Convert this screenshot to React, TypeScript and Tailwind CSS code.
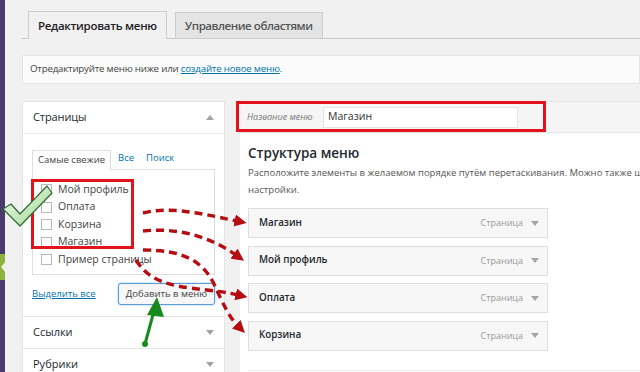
import React from 'react'

const font = { fontFamily: '"Open Sans", "Liberation Sans", sans-serif' }

const TriDown = () => (
  <span className="block w-0 h-0 border-l-[4px] border-r-[4px] border-t-[5px] border-l-transparent border-r-transparent border-t-[#a0a5aa]" />
)

const TriUp = () => (
  <span className="block w-0 h-0 border-l-[4px] border-r-[4px] border-b-[5px] border-l-transparent border-r-transparent border-b-[#a0a5aa]" />
)

const pages = ['Мой профиль', 'Оплата', 'Корзина', 'Магазин', 'Пример страницы']
const menuItems = ['Магазин', 'Мой профиль', 'Оплата', 'Корзина']

// red dashed arrows, green arrow and check mark drawn over the page
const Annotations: React.FC = () => (
  <svg className="absolute inset-0 pointer-events-none" width="640" height="372" viewBox="0 0 640 372">
    <defs>
      <marker id="rh" viewBox="0 0 10 10" refX="2" refY="5" markerWidth="3.6" markerHeight="3.6" orient="auto">
        <path d="M0,0 L10,5 L0,10 z" fill="#b50d12" />
      </marker>
      <linearGradient id="cg" x1="0" y1="0" x2="1" y2="1">
        <stop offset="0" stopColor="#f4fff0" />
        <stop offset="1" stopColor="#9ad58f" />
      </linearGradient>
    </defs>
    <g fill="none" stroke="#b50d12" strokeWidth="3.4" strokeDasharray="8 5" markerEnd="url(#rh)">
      <path d="M143,213 C168,207 190,211 237,221" />
      <path d="M143,231 C180,227 212,238 236,255" />
      <path d="M143,250 C185,250 203,262 214,284 C224,306 230,318 238,326" />
      <path d="M136,260 C146,276 160,284 190,288 C214,291 226,292 238,295" />
    </g>
    <line x1="145" y1="344" x2="154" y2="311" stroke="#168a1c" strokeWidth="3" />
    <polygon points="157,297 147,315 164,317" fill="#168a1c" />
    <circle cx="145" cy="344" r="3" fill="#168a1c" />
    <polygon
      points="3,209 11,204 20,214 47,186 52,193 20,226"
      fill="url(#cg)"
      stroke="#2f6a34"
      strokeWidth="1.2"
      strokeLinejoin="round"
    />
  </svg>
)

export default function App() {
  return (
    <div className="relative flex w-[640px] h-[372px] overflow-hidden bg-[#f1f1f1] text-[#444]" style={font}>
      {/* admin sidebar edge */}
      <div className="relative w-[5px] shrink-0 bg-[#4b3b6c]">
        <div className="absolute left-0 top-[254px] w-[5px] h-[26px] bg-[#8cb43c]" />
        <div className="absolute left-[1px] top-[261px] w-0 h-0 border-t-[6px] border-b-[6px] border-r-[5px] border-t-transparent border-b-transparent border-r-[#f1f1f1]" />
      </div>

      <div className="flex-1 min-w-0 pl-[17px] pt-[11px] flex flex-col">
        {/* tabs */}
        <div className="shrink-0 flex items-end gap-[8px] pl-[6px] h-[28px] border-b border-[#ccc]">
          <div className="h-[28px] -mb-px px-[9px] flex items-center border border-b-0 border-[#ccc] bg-[#f1f1f1] text-[11.5px] tracking-[-0.3px] font-semibold text-[#222]">
            Редактировать меню
          </div>
          <div className="h-[26px] px-[9px] flex items-center border border-b-0 border-[#ccc] bg-[#e4e4e4] text-[11.5px] tracking-[-0.45px] font-semibold text-[#555]">
            Управление областями
          </div>
        </div>

        {/* notice */}
        <div className="shrink-0 mt-[16px] h-[29px] bg-[#fbfbfb] border border-[#e5e5e5] flex items-center pl-[7px] text-[9.7px] tracking-[-0.2px] text-[#444]">
          <span>
            Отредактируйте меню ниже или{' '}
            <span className="text-[#0073aa] underline">создайте новое меню</span>.
          </span>
        </div>

        <div className="shrink-0 mt-[17px] flex">
          {/* left column */}
          <div className="w-[203px] shrink-0 bg-white border border-[#e5e5e5]">
            <div className="h-[32px] flex items-center justify-between pl-[10px] pr-[10px] border-b border-[#eee]">
              <span className="text-[11px] tracking-[-0.1px] text-[#23282d]">Страницы</span>
              <TriUp />
            </div>
            <div className="px-[9px] pt-[16px] pb-[11px]">
              <div className="flex items-end h-[19px] text-[9.5px]">
                <div className="h-[20px] -mb-px px-[5px] flex items-center border border-b-0 border-[#ddd] bg-white text-[#444] relative z-10">
                  Самые свежие
                </div>
                <span className="ml-[7px] mb-[4px] text-[#0073aa]">Все</span>
                <span className="ml-[12px] mb-[4px] text-[#0073aa]">Поиск</span>
              </div>
              <div className="h-[106px] border border-[#ddd] bg-white pt-[11px]">
                {pages.map(p => (
                  <div key={p} className="h-[17.5px] flex items-center pl-[8px]">
                    <span className="w-[11px] h-[11px] border border-[#b4b9be] bg-white shrink-0" />
                    <span className="ml-[6px] text-[10.5px] text-[#444]">{p}</span>
                  </div>
                ))}
              </div>
              <div className="mt-[8px] flex items-center justify-between h-[22px]">
                <span className="text-[9.5px] text-[#0073aa] underline">Выделить все</span>
                <div className="h-[22px] w-[97px] flex items-center justify-center border border-[#5b9dd9] rounded-[3px] bg-[#f7f7f7] text-[9.5px] text-[#444] shadow-[0_0_2px_rgba(30,140,190,0.6)]">
                  Добавить в меню
                </div>
              </div>
            </div>
            <div className="h-[32px] flex items-center justify-between px-[10px] border-t border-[#e5e5e5]">
              <span className="text-[11px] text-[#23282d]">Ссылки</span>
              <TriDown />
            </div>
            <div className="h-[32px] flex items-center justify-between px-[10px] border-t border-[#e5e5e5]">
              <span className="text-[11px] text-[#23282d]">Рубрики</span>
              <TriDown />
            </div>
          </div>

          {/* main column */}
          <div className="flex-1 min-w-0 ml-[12px] flex flex-col">
            <div className="h-[32px] bg-[#f5f5f5] border-y border-[#e5e5e5] flex items-center pl-[10px]">
              <span className="w-[76px] text-[9px] italic text-[#777] whitespace-nowrap">Название меню</span>
              <div className="w-[195px] h-[21px] bg-white border border-[#e5e5e5] flex items-center pl-[4px] text-[10.5px] text-[#333]">
                Магазин
              </div>
            </div>
            <div className="ml-[3px] bg-white flex-1 pl-[8px] pt-[10px] overflow-hidden">
              <div className="text-[13.5px] font-semibold text-[#23282d] leading-[20px]">Структура меню</div>
              <div className="mt-[1px] text-[9.5px] leading-[17px] text-[#555] whitespace-nowrap">
                Расположите элементы в желаемом порядке путём перетаскивания. Можно также щёлкнуть
                <br />
                настройки.
              </div>
              <div className="mt-[10px] flex flex-col gap-[7.5px] w-[300px]">
                {menuItems.map(m => (
                  <div key={m} className="h-[30px] bg-[#f7f7f7] border border-[#dfdfdf] flex items-center pl-[10px] pr-[8px]">
                    <span className="flex-1 text-[9.8px] font-semibold text-[#23282d]">{m}</span>
                    <span className="text-[9px] text-[#999]">Страница</span>
                    <span className="ml-[8px]"><TriDown /></span>
                  </div>
                ))}
              </div>
              <div className="mt-[19px] border-t border-[#eee]" />
            </div>
          </div>
        </div>
      </div>

      {/* red highlight boxes */}
      <div className="absolute left-[31px] top-[179px] w-[103px] h-[70px] border-[3px] border-[#e3131b]" />
      <div className="absolute left-[236px] top-[101px] w-[310px] h-[31px] border-[3px] border-[#e3131b]" />

      <Annotations />
    </div>
  )
}
